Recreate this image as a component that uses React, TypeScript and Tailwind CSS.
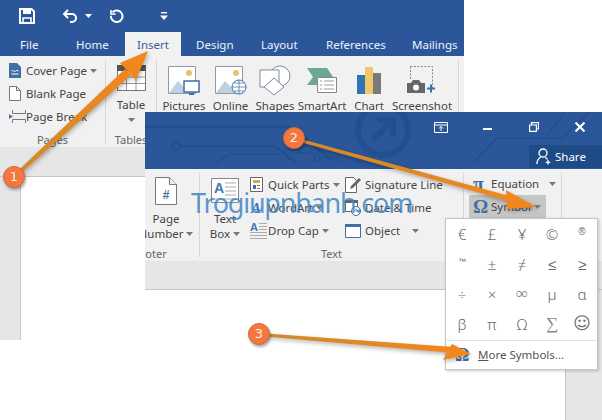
import type { ReactNode } from "react";

const Caret = ({ className = "" }: { className?: string }) => (
  <svg width="7" height="4" viewBox="0 0 7 4" className={className}>
    <path d="M0 0h7L3.5 4z" fill="#777" />
  </svg>
);

const SaveIcon = () => (
  <svg width="16" height="16" viewBox="0 0 16 16" fill="none">
    <path d="M1 1h11.5L15 3.5V15H1z" stroke="#fff" strokeWidth="2" />
    <path d="M4 1h8v5H4z" fill="#fff" />
    <path d="M4 15V10h8v5" stroke="#fff" strokeWidth="1.6" />
  </svg>
);

const UndoIcon = () => (
  <svg width="16" height="15" viewBox="0 0 16 15" fill="none" stroke="#fff" strokeWidth="2">
    <path d="M6 1 2 5l4 4" />
    <path d="M2 5h8a4 4 0 0 1 0 8H8" />
  </svg>
);

const RepeatIcon = () => (
  <svg width="15" height="15" viewBox="0 0 15 15" fill="none" stroke="#fff" strokeWidth="2">
    <path d="M3.5 3.2a5.8 5.8 0 1 1-1.6 3.6" />
    <path d="M2 1v4h4.6" strokeWidth="1.6" />
  </svg>
);

const CustomizeIcon = () => (
  <svg width="8" height="8" viewBox="0 0 8 8">
    <path d="M1 0h6v1.4H1z" fill="#fff" />
    <path d="M0 3.4h8L4 8z" fill="#fff" />
  </svg>
);

const CoverPageIcon = () => (
  <svg width="12" height="15" viewBox="0 0 12 15">
    <path d="M0 0h8l4 4v11H0z" fill="#3f6fa5" />
    <path d="M2.5 8q1 -1 2 0t2 0 3 0M2.5 11h7" stroke="#fff" fill="none" />
  </svg>
);

const BlankPageIcon = () => (
  <svg width="12" height="15" viewBox="0 0 12 15" fill="#fff" stroke="#777">
    <path d="M.5.5h7l4 4v10H.5zM7.5.5v4h4" />
  </svg>
);

const PageBreakIcon = () => (
  <svg width="17" height="15" viewBox="0 0 17 15" fill="none" stroke="#777">
    <path d="M3.5 1v3.5h13V1M3.5 14v-3.5h13V14" />
    <path d="M3.5 7.5H1" stroke="#3f6fa5" strokeWidth="1.5" />
    <path d="M0 5v5l3-2.5z" fill="#3f6fa5" stroke="none" />
  </svg>
);

const TableIcon = () => (
  <svg width="29" height="26" viewBox="0 0 29 26">
    <path d="M.5 1.5h28v24H.5z" fill="#fff" stroke="#777" />
    <path d="M0 0h29v6H0z" fill="#555" />
    <path d="M.5 12h28M.5 18.5h28M9.5 6v19M19 6v19" stroke="#999" fill="none" />
  </svg>
);

const PictureBase = ({ children }: { children?: ReactNode }) => (
  <svg width="32" height="29" viewBox="0 0 32 29">
    <path d="M.5.5h27v27H.5z" fill="#fff" stroke="#999" />
    <circle cx="21" cy="7" r="3" fill="#eabf73" />
    <path d="M1 27l9-12 6 6 3-2 8 8z" fill="#bdd0e4" />
    {children}
  </svg>
);

const ShapesIcon = () => (
  <svg width="33" height="31" viewBox="0 0 33 31" fill="#fff" stroke="#7d8c9c">
    <circle cx="21" cy="11" r="10" />
    <path d="M1 5h19v17H1z" />
    <path d="M15 13l10 9-10 8-10-8z" />
  </svg>
);

const SmartArtIcon = () => (
  <svg width="31" height="27" viewBox="0 0 31 27">
    <path d="M0 1h20l6 9-6 8H0l6-8z" fill="#6aa892" />
    <path d="M10.500 10.500h19v15h-19z" fill="#fff" stroke="#888" />
    <path d="M13 14h2M17 14h10M13 18h2M17 18h10M13 22h2M17 22h10" stroke="#999" />
  </svg>
);

const ChartIcon = () => (
  <svg width="24" height="27" viewBox="0 0 24 27">
    <path d="M0 8h8v19H0z" fill="#2e75b6" />
    <path d="M8 0h8v27H8z" fill="#f0c868" />
    <path d="M16 6h8v21h-8z" fill="#7a7a7a" />
  </svg>
);

const ScreenshotIcon = () => (
  <svg width="30" height="28" viewBox="0 0 30 28">
    <path d="M3.500.5h22v22" fill="none" stroke="#888" strokeDasharray="2 1.500" />
    <path d="M3.500.5v14" fill="none" stroke="#888" strokeDasharray="2 1.500" />
    <path d="M0 17h4l2-3h6l2 3h4v10H0z" fill="#666" />
    <circle cx="9" cy="21.500" r="3" fill="#fff" />
    <path d="M24 18.500v8M20 22.500h8" stroke="#2e75b6" strokeWidth="2" />
  </svg>
);

const DocHashIcon = () => (
  <svg width="22" height="28" viewBox="0 0 22 28">
    <path d="M.5.5h14l7 7v20H.5z" fill="#fff" stroke="#777" />
    <path d="M14.500.5v7h7" fill="#eee" stroke="#777" />
    <text x="11" y="22" textAnchor="middle" fontSize="12" fontWeight="700" fill="#3f6fa5" fontFamily="Liberation Sans, sans-serif">#</text>
  </svg>
);

const TextBoxIcon = () => (
  <svg width="29" height="26" viewBox="0 0 29 26">
    <path d="M.5.5h27v24H.5z" fill="#fff" stroke="#888" />
    <text x="3" y="15" fontSize="14" fontWeight="700" fill="#3f78b5" fontFamily="Liberation Sans, sans-serif">A</text>
    <path d="M14 5h11M14 9h11M14 13h11M14 17h11M3 21h22" stroke="#aaa" />
  </svg>
);

const QuickPartsIcon = () => (
  <svg width="13" height="15" viewBox="0 0 13 15">
    <path d="M.5.500h12v14H.5z" fill="#fff" stroke="#666" />
    <path d="M3 3h7v3H3z" fill="#d8a34e" />
    <path d="M3 8h3v4H3z" fill="#3f6fa5" />
    <path d="M7 8.500h3M7 11.500h3" stroke="#777" />
  </svg>
);

const WordArtIcon = () => (
  <svg width="13" height="15" viewBox="0 0 13 15">
    <text x="1" y="13" fontSize="15" fontStyle="italic" fontWeight="700" fill="#3f78b5" fontFamily="Liberation Serif, serif">A</text>
  </svg>
);

const DropCapIcon = () => (
  <svg width="17" height="17" viewBox="0 0 17 17">
    <text x="0" y="9" fontSize="11" fontWeight="700" fill="#3f78b5" fontFamily="Liberation Sans, sans-serif">A</text>
    <path d="M9 1.500h8M9 4.500h8M9 7.500h8M0 10.500h17M0 13.500h17M0 16.500h17" stroke="#aaa" />
  </svg>
);

const SignatureIcon = () => (
  <svg width="17" height="16" viewBox="0 0 17 16">
    <path d="M.5.500h8l3 3v12H.5z" fill="#fff" stroke="#666" />
    <path d="M5 12l1-3 8-8 2 2-8 8z" fill="#666" />
  </svg>
);

const DateTimeIcon = () => (
  <svg width="16" height="16" viewBox="0 0 16 16">
    <path d="M.5.500h12v11H.5z" fill="#fff" stroke="#666" />
    <path d="M0 0h13v3H0z" fill="#666" />
    <circle cx="11" cy="11" r="4.500" fill="#fff" stroke="#3f6fa5" />
    <path d="M11 8.500V11h2" stroke="#3f6fa5" fill="none" />
  </svg>
);

const ObjectIcon = () => (
  <svg width="16" height="14" viewBox="0 0 16 14">
    <path d="M.5.500h15v13H.5z" fill="#fff" stroke="#3f6fa5" />
    <path d="M0 0h16v3H0z" fill="#3f6fa5" />
  </svg>
);

const PersonPlusIcon = () => (
  <svg width="16" height="17" viewBox="0 0 16 17" fill="none" stroke="#fff" strokeWidth="1.300">
    <circle cx="7" cy="5" r="4" />
    <path d="M1 16c0-4 2-6 4-7M9 9.500c1 .3 2 1 2.600 2" />
    <path d="M12 12v4.500M9.800 14.300h4.500" />
  </svg>
);

// Faint circuit pattern behind the title bar of the front window
const TitleCircuit = () => (
  <svg width="457" height="57" viewBox="0 0 457 57" fill="none" stroke="#244f8e" className="absolute left-0 top-0">
    <path d="M0 15h145l42 33" strokeWidth="3" />
    <circle cx="31" cy="34" r="3.500" strokeWidth="2" />
    <path d="M35 34h95l20 16" strokeWidth="2" />
    <path d="M70 52l14-10h55l12 10" strokeWidth="1.500" />
    <path d="M150 41h18" strokeWidth="1.500" />
    <circle cx="172" cy="46" r="3" strokeWidth="1.500" />
    <path d="M176 46h16l6 5" strokeWidth="1.500" />
    <circle cx="238" cy="18" r="25" strokeWidth="6" />
    <path d="M228 28l20-20M232 8h16v16" strokeWidth="6" />
    <path d="M328 51l24-25h65l28-26M400 26l20-26" strokeWidth="1.500" />
  </svg>
);

const SmallButton = ({ icon, label, caretGap, iconCol = "w-[17px]" }: { icon: ReactNode; label: string; caretGap?: string; iconCol?: string }) => (
  <div className="flex h-[23px] items-center">
    <div className={`flex shrink-0 justify-start ${iconCol}`}>{icon}</div>
    <span className="whitespace-nowrap">{label}</span>
    {caretGap && <Caret className={caretGap} />}
  </div>
);

const BigButton = ({ icon, label, width }: { icon: ReactNode; label: string; width: string }) => (
  <div className={`flex shrink-0 flex-col items-center pt-[6px] ${width}`}>
    <div className="flex h-[36px] items-center">{icon}</div>
    <span className="whitespace-nowrap leading-[16px]">{label}</span>
  </div>
);

const GroupLabel = ({ children }: { children: ReactNode }) => (
  <div className="h-[14px] text-center text-[11px] leading-[14px] text-[#666]">{children}</div>
);

const Divider = () => <div className="my-[4px] w-px shrink-0 bg-[#d6d6d6]" />;

const BackWindow = () => (
  <div className="absolute left-0 top-0 flex h-[340px] w-[464px] flex-col">
    <div className="flex h-[32px] items-center bg-[#2b579a] pl-[19px]">
      <SaveIcon />
      <div className="ml-[27px] flex items-center">
        <UndoIcon />
        <Caret className="ml-[7px] brightness-[4]" />
      </div>
      <div className="ml-[17px]"><RepeatIcon /></div>
      <div className="ml-[36px]"><CustomizeIcon /></div>
    </div>
    <div className="flex h-[24px] items-stretch bg-[#2b579a] text-[11.5px] leading-[25px] text-[#eef3fa]">
      <span className="ml-[20px] w-[56px]">File</span>
      <span className="w-[49px]">Home</span>
      <span className="w-[56px] bg-[#f1f1f1] text-center text-[#3a5f96]">Insert</span>
      <span className="ml-[15px] w-[65px]">Design</span>
      <span className="w-[65px]">Layout</span>
      <span className="w-[86px]">References</span>
      <span>Mailings</span>
    </div>
    <div className="flex h-[91px] bg-[#f1f1f1] text-[11.5px] text-[#444]">
      <div className="flex w-[105px] flex-col">
        <div className="flex-1 pl-[9px] pt-[3px]">
          <SmallButton icon={<CoverPageIcon />} label="Cover Page" caretGap="ml-[3px]" />
          <SmallButton icon={<BlankPageIcon />} label="Blank Page" />
          <SmallButton icon={<PageBreakIcon />} label="Page Break" />
        </div>
        <GroupLabel>Pages</GroupLabel>
      </div>
      <Divider />
      <div className="flex w-[50px] flex-col">
        <div className="flex flex-1 flex-col items-center pt-[9px]">
          <TableIcon />
          <span className="mt-[6px] leading-[16px]">Table</span>
          <Caret className="mt-[5px]" />
        </div>
        <GroupLabel>Tables</GroupLabel>
      </div>
      <Divider />
      <div className="ml-[3px] flex">
        <BigButton width="w-[48px]" label="Pictures" icon={<PictureBase><path d="M16 15h15v11H16z" fill="#fff" stroke="#3f6fa5" strokeWidth="1.500" /><path d="M21 28h5" stroke="#3f6fa5" strokeWidth="2" /></PictureBase>} />
        <BigButton width="w-[45px]" label="Online" icon={<PictureBase><circle cx="24" cy="21" r="7" fill="#fff" stroke="#3f6fa5" /><path d="M17 21h14M24 14v14M19 17h10M19 25h10" stroke="#3f6fa5" strokeWidth=".7" /></PictureBase>} />
        <BigButton width="w-[44px]" label="Shapes" icon={<ShapesIcon />} />
        <BigButton width="w-[50px]" label="SmartArt" icon={<SmartArtIcon />} />
        <BigButton width="w-[44px]" label="Chart" icon={<ChartIcon />} />
        <BigButton width="w-[62px]" label="Screenshot" icon={<ScreenshotIcon />} />
      </div>
      <div className="ml-[5px]"><div className="mt-[4px] h-[83px] w-px bg-[#d6d6d6]" /></div>
    </div>
    <div className="h-[30px] border-b border-[#c6c6c6] bg-[#e6e6e6]" />
    <div className="flex flex-1 bg-white">
      <div className="w-[21px] border-r border-[#c6c6c6] bg-[#e6e6e6]" />
    </div>
  </div>
);

const symbols = ["€", "£", "¥", "©", "®", "™", "±", "≠", "≤", "≥", "÷", "×", "∞", "µ", "α", "β", "π", "Ω", "∑", "☺"];

const symbolClass = (s: string) => {
  if (s === "☺") return "font-['DejaVu_Sans',sans-serif] text-[17px]";
  if (s === "®") return "pb-[5px] font-['Liberation_Sans',sans-serif] text-[10px]";
  if (s === "™") return "pb-[5px] font-['Liberation_Sans',sans-serif] text-[8px]";
  if (s === "∑" || s === "∞") return "font-['Liberation_Serif',serif] text-[17px] font-normal text-[#888]";
  return "font-light";
};

const SymbolMenu = () => (
  <div className="absolute left-[300px] top-[106px] w-[153px] border border-[#c6c6c6] bg-white shadow-[1px_1px_3px_rgba(0,0,0,0.2)]">
    <div className="grid grid-cols-[repeat(5,30px)] grid-rows-[repeat(4,30px)] px-px text-[15px] text-[#6a6a6a]">
      {symbols.map((s) => (
        <div key={s} className={`flex items-center justify-center ${symbolClass(s)}`}>
          {s}
        </div>
      ))}
    </div>
    <div className="mt-[1px] flex h-[29px] items-center border-t border-[#e2e2e2] pl-[9px] text-[11.5px] text-[#555]">
      <span className="w-[23px] font-['Liberation_Serif',serif] text-[18px] font-bold leading-none text-[#3f6fa5]">Ω</span>
      <span className="underline">M</span>ore Symbols...
    </div>
  </div>
);

const FrontWindow = () => (
  <div className="absolute left-[145px] top-[112px] flex h-[308px] w-[457px] flex-col">
    <div className="relative h-[57px] bg-[#2b579a]">
      <TitleCircuit />
      <div className="relative flex h-[33px] items-center justify-end pb-[3px]">
        <div className="flex w-[46px] justify-center">
          <svg width="14" height="11" viewBox="0 0 14 11" fill="none" stroke="#fff">
            <path d="M.5.500h13v10H.5zM.5 3h13M7 9V4.500M5 6.500l2-2 2 2" />
          </svg>
        </div>
        <div className="flex w-[47px] justify-center">
          <div className="mt-[4px] h-[2px] w-[9px] bg-white" />
        </div>
        <div className="flex w-[46px] justify-center">
          <svg width="10" height="10" viewBox="0 0 10 10" fill="none" stroke="#fff" strokeWidth="1.200">
            <path d="M.6 3h6.800v6.400H.6zM2.500 3V.6h7V7H7.400" />
          </svg>
        </div>
        <div className="flex w-[45px] justify-center">
          <svg width="10" height="10" viewBox="0 0 10 10" stroke="#fff" strokeWidth="2">
            <path d="M.5.500l9 9M9.500.500l-9 9" />
          </svg>
        </div>
      </div>
      <div className="relative flex h-[23px] justify-end">
        <div className="flex w-[73px] items-center gap-[3px] bg-[#1e4a86] pl-[7px] text-[11.5px] text-white">
          <PersonPlusIcon />
          Share
        </div>
      </div>
    </div>
    <div className="flex h-[92px] overflow-hidden bg-[#f1f1f1] text-[11.5px] text-[#444]">
      <div className="ml-[-12px] flex w-[66px] shrink-0 flex-col">
        <div className="flex flex-1 flex-col items-center pt-[8px]">
          <DocHashIcon />
          <span className="mt-[6px] leading-[15px]">Page</span>
          <span className="flex items-center gap-[3px] leading-[15px]">Number<Caret /></span>
        </div>
        <GroupLabel><span className="block text-left">Footer</span></GroupLabel>
      </div>
      <Divider />
      <div className="flex w-[263px] shrink-0 flex-col">
        <div className="flex flex-1">
          <div className="flex w-[50px] flex-col items-center pt-[9px]">
            <TextBoxIcon />
            <span className="mt-[7px] leading-[15px]">Text</span>
            <span className="flex items-center gap-[3px] leading-[15px]">Box<Caret /></span>
          </div>
          <div className="w-[95px] pt-[4px]">
            <SmallButton iconCol="w-[18px]" icon={<QuickPartsIcon />} label="Quick Parts" caretGap="ml-[3px]" />
            <SmallButton iconCol="w-[18px]" icon={<WordArtIcon />} label="WordArt" caretGap="ml-[3px]" />
            <SmallButton iconCol="w-[18px]" icon={<DropCapIcon />} label="Drop Cap" caretGap="ml-[3px]" />
          </div>
          <div className="pt-[4px]">
            <SmallButton iconCol="w-[20px]" icon={<SignatureIcon />} label="Signature Line" />
            <SmallButton iconCol="w-[20px]" icon={<DateTimeIcon />} label="Date & Time" />
            <SmallButton iconCol="w-[20px]" icon={<ObjectIcon />} label="Object" caretGap="ml-[12px]" />
          </div>
        </div>
        <GroupLabel>Text</GroupLabel>
      </div>
      <Divider />
      <div className="flex w-[97px] shrink-0 flex-col pl-[5px] pt-[3px]">
        <div className="flex h-[23px] w-[88px] items-center pl-[4px]">
          <span className="w-[18px] font-['Liberation_Serif',serif] text-[20px] font-bold leading-none text-[#3f6fa5]">π</span>
          <span>Equation</span>
          <Caret className="ml-[10px]" />
        </div>
        <div className="flex h-[23px] w-[77px] items-center bg-[#c6c6c6] pl-[4px]">
          <span className="w-[18px] font-['Liberation_Serif',serif] text-[19px] font-bold leading-none text-[#3f6fa5]">Ω</span>
          <span>Symbol</span>
          <Caret className="ml-[3px]" />
        </div>
      </div>
      <Divider />
    </div>
    <div className="h-[29px] border-b border-[#c6c6c6] bg-[#e6e6e6]" />
    <div className="flex flex-1 bg-white">
      <div className="flex-1" />
      <div className="w-[37px] border-l border-[#c6c6c6] bg-[#e6e6e6]" />
    </div>
    <SymbolMenu />
  </div>
);

const Badge = ({ n, className }: { n: number; className: string }) => (
  <div className={`absolute flex h-[22px] w-[22px] items-center justify-center rounded-full border border-[#d9683a] bg-[#f4773f] font-['DejaVu_Sans',sans-serif] text-[13px] text-[#fdeedd] shadow-[1px_2px_3px_rgba(0,0,0,0.35)] ${className}`}>
    {n}
  </div>
);

// Callout arrows run over both windows, so they get their own layer
const Arrows = () => (
  <svg width="602" height="420" viewBox="0 0 602 420" className="pointer-events-none absolute left-0 top-0 drop-shadow-[1px_2px_2px_rgba(0,0,0,0.3)]">
    <defs>
      <linearGradient id="arrow-one" gradientUnits="userSpaceOnUse" x1="14" y1="177" x2="148" y2="51">
        <stop offset="0" stopColor="#cf8a2c" />
        <stop offset="1" stopColor="#f5861d" />
      </linearGradient>
      <linearGradient id="arrow-two" gradientUnits="userSpaceOnUse" x1="294" y1="138" x2="536" y2="207">
        <stop offset="0" stopColor="#cf8a2c" />
        <stop offset="1" stopColor="#f5861d" />
      </linearGradient>
      <linearGradient id="arrow-three" gradientUnits="userSpaceOnUse" x1="259" y1="334" x2="471" y2="354">
        <stop offset="0" stopColor="#cf8a2c" />
        <stop offset="1" stopColor="#f5861d" />
      </linearGradient>
    </defs>
    <path d="M13 175.500 15 178.500 131 75 125 69zM148 51 120 63 136 80z" fill="url(#arrow-one)" />
    <path d="M294 137 293 140 512 202 513 197zM536 207 506 190 507 209z" fill="url(#arrow-two)" />
    <path d="M259 333 259 336 453 353 453 347zM471 354 452 344 443 360z" fill="url(#arrow-three)" />
  </svg>
);

export default function App() {
  return (
    <div className="relative h-[420px] w-[602px] overflow-hidden bg-white font-['Noto_Sans',sans-serif]">
      <BackWindow />
      <FrontWindow />
      <div className="absolute left-[191px] top-[183px] whitespace-nowrap text-[27px] leading-[40px] tracking-[-1.25px] text-[#3f86c6]/85">
        Trogiupnhanh.com
      </div>
      <Arrows />
      <Badge n={1} className="left-[3px] top-[166px]" />
      <Badge n={2} className="left-[283px] top-[127px]" />
      <Badge n={3} className="left-[248px] top-[323px]" />
    </div>
  );
}
